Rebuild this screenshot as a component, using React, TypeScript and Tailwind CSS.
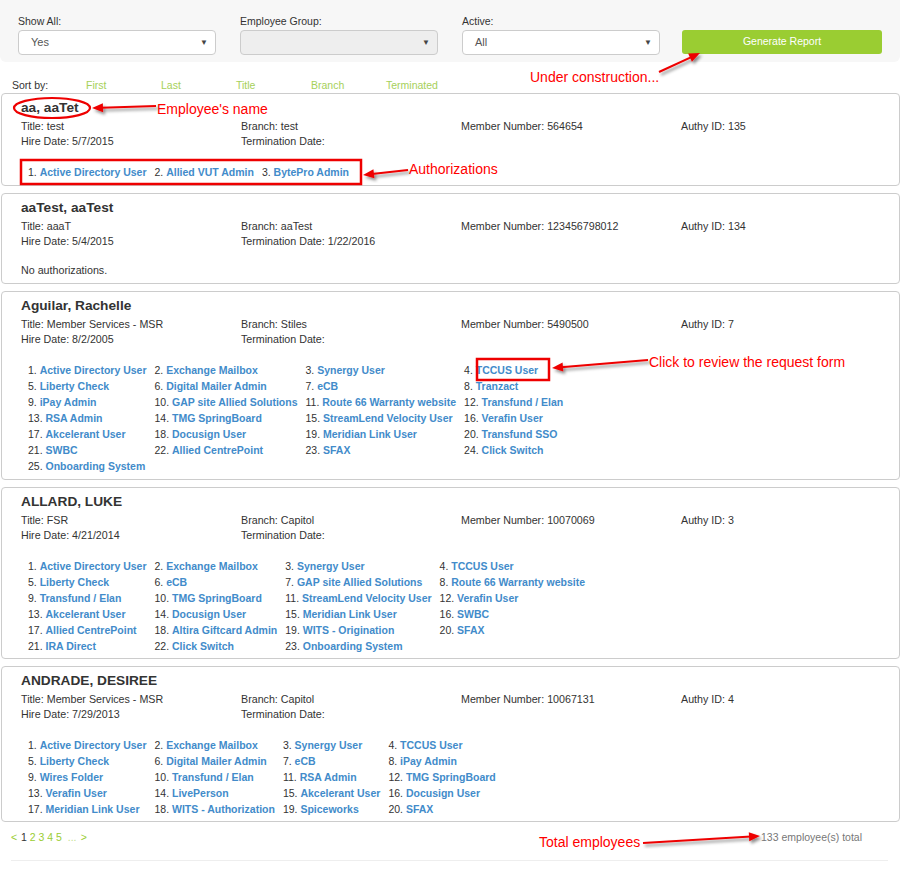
import React from "react";

type Emp = {
  name: string;
  title: string;
  branch: string;
  member: string;
  authy: string;
  hire: string;
  term: string;
  auths: string[];
};

const emps: Emp[] = [
  {
    name: "aa, aaTet",
    title: "test",
    branch: "test",
    member: "564654",
    authy: "135",
    hire: "5/7/2015",
    term: "",
    auths: ["Active Directory User", "Allied VUT Admin", "BytePro Admin"],
  },
  {
    name: "aaTest, aaTest",
    title: "aaaT",
    branch: "aaTest",
    member: "123456798012",
    authy: "134",
    hire: "5/4/2015",
    term: "1/22/2016",
    auths: [],
  },
  {
    name: "Aguilar, Rachelle",
    title: "Member Services - MSR",
    branch: "Stiles",
    member: "5490500",
    authy: "7",
    hire: "8/2/2005",
    term: "",
    auths: [
      "Active Directory User",
      "Exchange Mailbox",
      "Synergy User",
      "TCCUS User",
      "Liberty Check",
      "Digital Mailer Admin",
      "eCB",
      "Tranzact",
      "iPay Admin",
      "GAP site Allied Solutions",
      "Route 66 Warranty website",
      "Transfund / Elan",
      "RSA Admin",
      "TMG SpringBoard",
      "StreamLend Velocity User",
      "Verafin User",
      "Akcelerant User",
      "Docusign User",
      "Meridian Link User",
      "Transfund SSO",
      "SWBC",
      "Allied CentrePoint",
      "SFAX",
      "Click Switch",
      "Onboarding System",
    ],
  },
  {
    name: "ALLARD, LUKE",
    title: "FSR",
    branch: "Capitol",
    member: "10070069",
    authy: "3",
    hire: "4/21/2014",
    term: "",
    auths: [
      "Active Directory User",
      "Exchange Mailbox",
      "Synergy User",
      "TCCUS User",
      "Liberty Check",
      "eCB",
      "GAP site Allied Solutions",
      "Route 66 Warranty website",
      "Transfund / Elan",
      "TMG SpringBoard",
      "StreamLend Velocity User",
      "Verafin User",
      "Akcelerant User",
      "Docusign User",
      "Meridian Link User",
      "SWBC",
      "Allied CentrePoint",
      "Altira Giftcard Admin",
      "WITS - Origination",
      "SFAX",
      "IRA Direct",
      "Click Switch",
      "Onboarding System",
    ],
  },
  {
    name: "ANDRADE, DESIREE",
    title: "Member Services - MSR",
    branch: "Capitol",
    member: "10067131",
    authy: "4",
    hire: "7/29/2013",
    term: "",
    auths: [
      "Active Directory User",
      "Exchange Mailbox",
      "Synergy User",
      "TCCUS User",
      "Liberty Check",
      "Digital Mailer Admin",
      "eCB",
      "iPay Admin",
      "Wires Folder",
      "Transfund / Elan",
      "RSA Admin",
      "TMG SpringBoard",
      "Verafin User",
      "LivePerson",
      "Akcelerant User",
      "Docusign User",
      "Meridian Link User",
      "WITS - Authorization",
      "Spiceworks",
      "SFAX",
    ],
  },
];

function Select({ value, disabled }: { value: string; disabled?: boolean }) {
  return (
    <div
      className={
        "h-[25px] border border-[#cccccc] rounded-[4px] flex items-center justify-between pl-[12px] pr-[7px] text-[11px] text-[#555]" +
        (disabled ? " bg-[#eeeeee]" : " bg-white")
      }
    >
      <span>{value}</span>
      <span className="text-[8px] text-[#444] leading-none">▼</span>
    </div>
  );
}

function Card({ e, tight }: { e: Emp; tight?: boolean }) {
  return (
    <div
      className={
        "border border-[#cccccc] rounded-[4px] pl-[19px] pt-[5px] " + (tight ? "pb-[4px]" : "pb-[5px]")
      }
    >
      <div className="text-[13.7px] font-bold leading-[18px] text-[#333]">{e.name}</div>
      <div className="mt-[2px] grid grid-cols-[220px_220px_220px_220px] text-[10.7px] leading-[15px] text-[#333]">
        <div>Title: {e.title}</div>
        <div>Branch: {e.branch}</div>
        <div>Member Number: {e.member}</div>
        <div>Authy ID: {e.authy}</div>
        <div>Hire Date: {e.hire}</div>
        <div>Termination Date: {e.term}</div>
      </div>
      {e.auths.length > 0 ? (
        <div className="mt-[15px] pl-[7px] grid grid-cols-[repeat(4,max-content)] gap-x-[8px] text-[10.5px] leading-[16px]">
          {e.auths.map((a, i) => (
            <div key={i} className="whitespace-nowrap">
              <span className="text-[#333]">{i + 1}. </span>
              <span className="font-bold text-[#428bca]">{a}</span>
            </div>
          ))}
        </div>
      ) : (
        <div className="mt-[13px] text-[10.7px] leading-[16px] text-[#333]">No authorizations.</div>
      )}
    </div>
  );
}

function Arrow({ x1, y1, x2, y2 }: { x1: number; y1: number; x2: number; y2: number }) {
  const dx = x2 - x1;
  const dy = y2 - y1;
  const len = Math.sqrt(dx * dx + dy * dy);
  const ux = dx / len;
  const uy = dy / len;
  const hl = 11;
  const hw = 4.5;
  const bx = x2 - ux * hl;
  const by = y2 - uy * hl;
  const px = -uy;
  const py = ux;
  const pts = `${x2},${y2} ${bx + px * hw},${by + py * hw} ${bx - px * hw},${by - py * hw}`;
  return (
    <g filter="url(#shadow)">
      <line x1={x1} y1={y1} x2={bx + ux * 2} y2={by + uy * 2} stroke="#ee0000" strokeWidth={2} />
      <polygon points={pts} fill="#ee0000" />
    </g>
  );
}

export default function App() {
  const sortItems = ["First", "Last", "Title", "Branch", "Terminated"];
  return (
    <div className="relative w-[917px] min-h-[871px] bg-white text-[#333] font-['Liberation_Sans',Arial,sans-serif]">
      <div className="w-[900px]">
        {/* Filter panel */}
        <div className="h-[62px] bg-[#f7f7f7] rounded-b-[6px] px-[18px] pt-[15px] grid grid-cols-4 gap-x-[24px]">
          <div>
            <div className="text-[10.5px] leading-[12px] mb-[3px]">Show All:</div>
            <Select value="Yes" />
          </div>
          <div>
            <div className="text-[10.5px] leading-[12px] mb-[3px]">Employee Group:</div>
            <Select value="" disabled />
          </div>
          <div>
            <div className="text-[10.5px] leading-[12px] mb-[3px]">Active:</div>
            <Select value="All" />
          </div>
          <div>
            <div className="mt-[15px] -ml-[2px] h-[24px] rounded-[3px] bg-[#9acd32] text-white text-[10.5px] flex items-center justify-center">
              Generate Report
            </div>
          </div>
        </div>

        {/* Sort row */}
        <div className="mt-[17px] h-[12px] flex items-center text-[10.5px] leading-[12px]">
          <div className="ml-[12px] w-[74px] text-[#333]">Sort by:</div>
          {sortItems.map((s) => (
            <div key={s} className="w-[75px] text-[#a6d05a]">
              {s}
            </div>
          ))}
        </div>

        {/* Cards */}
        <div className="mt-[2px] ml-[1px] w-[899px] flex flex-col gap-[7px]">
          {emps.map((e, i) => (
            <Card key={e.name} e={e} tight={i >= 3} />
          ))}
        </div>

        {/* Footer */}
        <div className="mt-[9px] flex justify-between pl-[11px] pr-[38px] text-[10.5px] leading-[12px]">
          <div className="flex">
            <span className="w-[10px] text-[#9acd32]">&lt;</span>
            <span className="w-[8.75px] text-[#333]">1</span>
            <span className="w-[8.75px] text-[#9acd32]">2</span>
            <span className="w-[8.75px] text-[#9acd32]">3</span>
            <span className="w-[8.75px] text-[#9acd32]">4</span>
            <span className="w-[8.75px] text-[#9acd32]">5</span>
            <span className="ml-[3px] w-[13px] text-[#c4e08e]">...</span>
            <span className="text-[#9acd32]">&gt;</span>
          </div>
          <div className="text-[#777]">133 employee(s) total</div>
        </div>
        <div className="mt-[17px] ml-[11px] w-[877px] border-t border-[#eeeeee]"></div>
      </div>

      {/* Annotation overlay */}
      <svg className="absolute left-0 top-0 pointer-events-none" width={917} height={871}>
        <defs>
          <filter id="shadow" x="-20%" y="-50%" width="140%" height="200%">
            <feDropShadow dx="2" dy="2.5" stdDeviation="1.5" floodColor="#000" floodOpacity="0.45" />
          </filter>
        </defs>
        <ellipse cx={52} cy={108} rx={38} ry={10} fill="none" stroke="#ee0000" strokeWidth={2.2} />
        <rect x={21} y={160} width={340} height={24} fill="none" stroke="#ee0000" strokeWidth={2.5} />
        <rect x={477} y={359} width={72} height={21} fill="none" stroke="#ee0000" strokeWidth={2.5} />
        <Arrow x1={156} y1={106} x2={92} y2={108} />
        <Arrow x1={408} y1={170} x2={363} y2={175} />
        <Arrow x1={659} y1={72} x2={700} y2={53} />
        <Arrow x1={648} y1={360} x2={552} y2={368} />
        <Arrow x1={643} y1={843} x2={760} y2={836} />
      </svg>
      <div className="absolute left-[157px] top-[101px] text-[14px] leading-[16px] text-[#ff0000] whitespace-nowrap">Employee's name</div>
      <div className="absolute left-[409px] top-[161px] text-[14px] leading-[16px] text-[#ff0000] whitespace-nowrap">Authorizations</div>
      <div className="absolute left-[530px] top-[69px] text-[14px] leading-[16px] text-[#ff0000] whitespace-nowrap">Under construction...</div>
      <div className="absolute left-[649px] top-[354px] text-[14px] leading-[16px] text-[#ff0000] whitespace-nowrap">Click to review the request form</div>
      <div className="absolute left-[539px] top-[834px] text-[14px] leading-[16px] text-[#ff0000] whitespace-nowrap">Total employees</div>
    </div>
  );
}
